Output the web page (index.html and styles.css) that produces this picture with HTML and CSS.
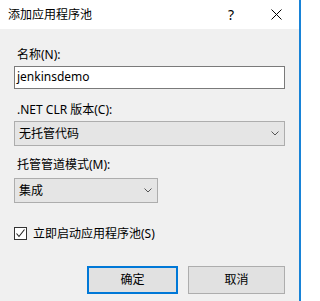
FILE: index.html
```html
<!DOCTYPE html>
<html lang="zh-CN">
<head>
<meta charset="utf-8">
<title>添加应用程序池</title>
<link rel="stylesheet" href="styles.css">
</head>
<body>
<div class="window">
  <div class="titlebar">
    <span class="title">添加应用程序池</span>
    <span class="help">?</span>
    <span class="close"><svg width="11" height="11" viewBox="0 0 11 11"><path d="M0.5 0.5 L10.5 10.5 M10.5 0.5 L0.5 10.5" stroke="#000" stroke-width="1" fill="none"/></svg></span>
  </div>
  <div class="content">
    <div class="label l1">名称(N):</div>
    <div class="textbox">jenkinsdemo</div>
    <div class="label l2">.NET CLR 版本(C):</div>
    <div class="combo wide"><span>无托管代码</span><svg class="chev" width="8" height="5" viewBox="0 0 8 5"><path d="M0.5 0.5 L4 4 L7.5 0.5" stroke="#555" stroke-width="1" fill="none"/></svg></div>
    <div class="label l3">托管管道模式(M):</div>
    <div class="combo narrow"><span>集成</span><svg class="chev" width="8" height="5" viewBox="0 0 8 5"><path d="M0.5 0.5 L4 4 L7.5 0.5" stroke="#555" stroke-width="1" fill="none"/></svg></div>
    <div class="check">
      <span class="box"><svg width="11" height="11" viewBox="0 0 11 11"><path d="M1.5 5.5 L4 8.5 L9.5 1.5" stroke="#222" stroke-width="1.1" fill="none"/></svg></span>
      <span class="check-text">立即启动应用程序池(S)</span>
    </div>
    <div class="buttons">
      <div class="btn default">确定</div>
      <div class="btn cancel">取消</div>
    </div>
  </div>
</div>
</body>
</html>
```

FILE: styles.css
```css
html, body {
  margin: 0;
  padding: 0;
}
body {
  width: 301px;
  height: 301px;
  overflow: hidden;
  font-family: "Noto Sans", "Noto Sans CJK SC", sans-serif;
  font-size: 12px;
  color: #000;
}
.window {
  width: 299px;
  height: 301px;
  border-right: 2px solid #1883d7;
  background: #f0f0f0;
  display: flex;
  flex-direction: column;
}
.titlebar {
  height: 29px;
  background: #fff;
  display: flex;
  align-items: center;
  flex-shrink: 0;
}
.title {
  margin-left: 8px;
  line-height: 16px;
  margin-top: 1px;
}
.help {
  margin-left: auto;
  font-size: 14px;
  line-height: 16px;
  margin-right: 37px;
  margin-top: 0;
}
.close {
  width: 11px;
  height: 11px;
  margin-right: 17px;
  display: flex;
}
.content {
  padding-left: 14px;
  display: flex;
  flex-direction: column;
  align-items: flex-start;
}
.label {
  line-height: 16px;
  padding-left: 3px;
}
.l1 { margin-top: 18px; }
.l2 { margin-top: 13px; }
.l3 { margin-top: 11px; }
.textbox {
  box-sizing: border-box;
  width: 271px;
  height: 23px;
  margin-top: 3px;
  border: 1px solid #7a7a7a;
  background: #fff;
  padding-left: 2px;
  line-height: 20px;
}
.combo {
  box-sizing: border-box;
  height: 25px;
  border: 1px solid #adadad;
  background: #e5e5e5;
  display: flex;
  align-items: center;
  padding-left: 4px;
  padding-right: 5px;
}
.combo span {
  line-height: 16px;
}
.combo .chev {
  margin-left: auto;
}
.wide {
  width: 271px;
  margin-top: 3px;
}
.narrow {
  width: 144px;
  margin-top: 5px;
}
.check {
  display: flex;
  align-items: center;
  margin-top: 24px;
  height: 13px;
}
.box {
  box-sizing: border-box;
  width: 13px;
  height: 13px;
  border: 1px solid #333;
  background: #fff;
  display: flex;
  align-items: center;
  justify-content: center;
}
.check-text {
  margin-left: 6px;
  line-height: 16px;
}
.buttons {
  display: flex;
  margin-top: 26px;
  margin-left: 73px;
  gap: 10px;
}
.btn {
  box-sizing: border-box;
  height: 28px;
  background: #e1e1e1;
  border: 1px solid #adadad;
  display: flex;
  align-items: center;
  justify-content: center;
  line-height: 16px;
}
.default {
  width: 91px;
  border: 2px solid #0078d7;
}
.cancel {
  width: 97px;
}
```
